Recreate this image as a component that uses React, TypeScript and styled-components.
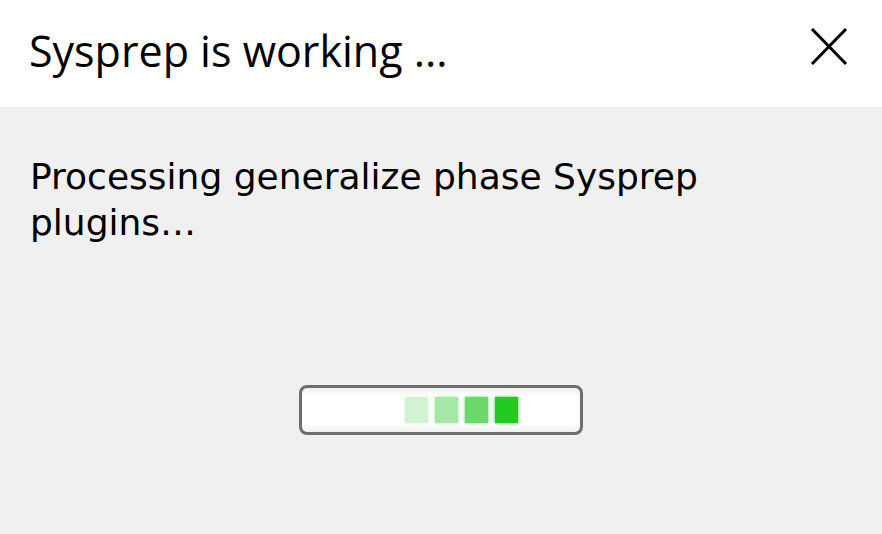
import React from "react";
import styled, { createGlobalStyle } from "styled-components";

const Global = createGlobalStyle`
  html, body { margin: 0; padding: 0; background: #f0f0f0; }
  #root { width: 882px; height: 534px; }
`;

const Window = styled.div`
  width: 882px;
  height: 534px;
  display: flex;
  flex-direction: column;
  overflow: hidden;
`;

const TitleBar = styled.div`
  height: 107px;
  flex: none;
  background: #ffffff;
  display: flex;
  align-items: center;
  justify-content: space-between;
  padding: 0 34px 0 29px;
  box-sizing: border-box;
`;

const Title = styled.div`
  font-family: "Open Sans", "Noto Sans", sans-serif;
  font-size: 43px;
  color: #000;
  margin-top: -6px;
`;

const CloseButton = styled.div`
  width: 38px;
  height: 39px;
  display: flex;
  margin-top: -14px;
`;

const Body = styled.div`
  flex: 1;
  background: #f0f0f0;
  display: flex;
  flex-direction: column;
  padding: 47px 30px 0 30px;
  box-sizing: border-box;
`;

const Message = styled.div`
  font-family: "DejaVu Sans", sans-serif;
  font-size: 36px;
  line-height: 46px;
  color: #000;
  width: 720px;
`;

const BarWrap = styled.div`
  display: flex;
  justify-content: center;
  margin-top: 139px;
`;

const Bar = styled.div`
  width: 284px;
  height: 50px;
  box-sizing: border-box;
  border: 3px solid #6e6e6e;
  border-radius: 8px;
  background: linear-gradient(#f0f0f0, #ffffff 20%, #ffffff 80%, #f0f0f0);
  display: flex;
  align-items: center;
  padding-left: 103px;
  gap: 7px;
`;

const Block = styled.div<{ $c: string }>`
  width: 23px;
  height: 26px;
  background: ${(p) => p.$c};
  box-shadow: 0 0 3px ${(p) => p.$c};
`;

export default function App() {
  return (
    <>
      <Global />
      <Window>
        <TitleBar>
          <Title>Sysprep is working ...</Title>
          <CloseButton>
            <svg width="38" height="39" viewBox="0 0 38 39">
              <path d="M2 2 L36 37 M36 2 L2 37" stroke="#000" strokeWidth="3" />
            </svg>
          </CloseButton>
        </TitleBar>
        <Body>
          <Message>Processing generalize phase Sysprep plugins…</Message>
          <BarWrap>
            <Bar>
              <Block $c="#d2f3d2" />
              <Block $c="#a4e8a4" />
              <Block $c="#6ad86a" />
              <Block $c="#22cb22" />
            </Bar>
          </BarWrap>
        </Body>
      </Window>
    </>
  );
}
